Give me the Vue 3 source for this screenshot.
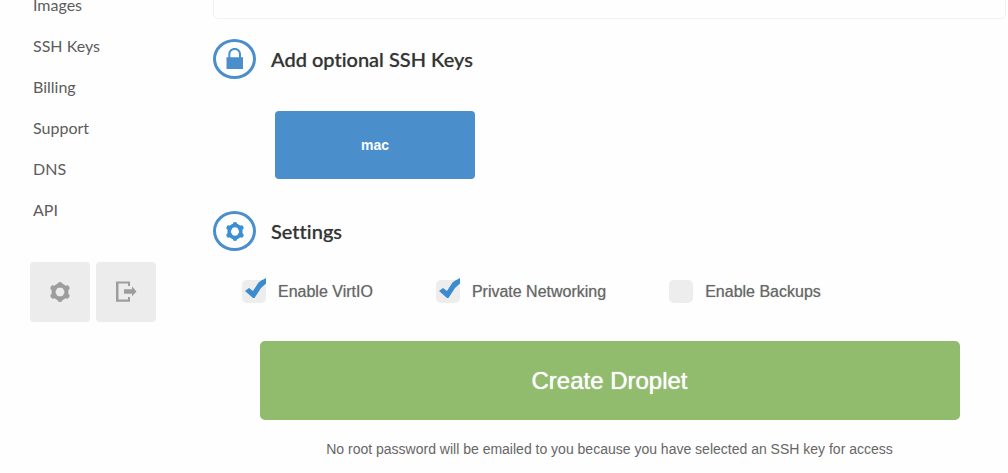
<script setup>
import { ref } from 'vue'

const links = ['Images', 'SSH Keys', 'Billing', 'Support', 'DNS', 'API']
const options = ref([
  { id: 'virtio', label: 'Enable VirtIO', on: true },
  { id: 'network', label: 'Private Networking', on: true },
  { id: 'backups', label: 'Enable Backups', on: false }
])
// Six short rounded teeth around the gear's ring
const teeth = 'M10 3 V2.500 M10 17 V17.500 M4 6.600 L3 6 M16 6.600 L17 6 M4 13.400 L3 14 M16 13.400 L17 14'
</script>

<template>
  <div class="page">
    <aside class="side">
      <nav>
        <a v-for="l in links" :key="l" href="#">{{ l }}</a>
      </nav>
      <div class="tools">
        <button type="button" aria-label="Account settings">
          <svg class="cog" width="20" height="20" viewBox="0 0 20 20">
            <circle cx="10" cy="10" r="6.500" />
            <path :d="teeth" />
          </svg>
        </button>
        <button type="button" aria-label="Log out">
          <svg width="22" height="22" viewBox="0 0 22 22">
            <path d="M1 0.500 H15 V5 H13 V2.500 H3.500 V18.500 H13 V16 H15 V20.800 H1 Z M9 8.300 H17 V5.500 L21.500 10.500 L17 15.200 V12.700 H9 Z" />
          </svg>
        </button>
      </div>
    </aside>

    <main class="main">
      <div class="panel"></div>

      <section>
        <h2>
          <span class="ring">
            <svg width="18" height="22" viewBox="0 0 18 22">
              <path d="M0.500 9.300 H2.300 V6.500 C2.300 2.500 5 0 8.700 0 C12.400 0 15 2.500 15 6.500 V9.300 H17 V21 H0.500 Z M4.300 9.300 H13 V6.500 C13 3.700 11.400 2 8.700 2 C6 2 4.300 3.700 4.300 6.500 Z" fill-rule="evenodd" />
            </svg>
          </span>
          Add optional SSH Keys
        </h2>
        <button type="button" class="key">mac</button>
      </section>

      <section>
        <h2>
          <span class="ring gear">
            <svg class="cog" width="18" height="19" viewBox="0 0 20 20" preserveAspectRatio="none">
              <circle cx="10" cy="10" r="6.500" />
              <path :d="teeth" />
            </svg>
          </span>
          Settings
        </h2>
        <div class="options">
          <label v-for="o in options" :key="o.id" :for="o.id">
            <span class="box">
              <input :id="o.id" v-model="o.on" type="checkbox" />
              <svg v-if="o.on" class="tick" width="24" height="24" viewBox="0 0 24 24">
                <path d="M3 13 L7 10 L11 13 L16.500 4.500 C18 3 21 1.500 24 0 V5.500 L19 10 L12.500 20 H11 Z" />
              </svg>
            </span>
            {{ o.label }}
          </label>
        </div>
      </section>

      <button type="button" class="create">Create Droplet</button>
      <p class="note">No root password will be emailed to you because you have selected an SSH key for access</p>
    </main>
  </div>
</template>

<style>
body {
  margin: 0;
  background: #fefefe;
}
</style>

<style scoped>
.page {
  display: grid;
  grid-template-columns: 213px 1fr;
  overflow: hidden;
  font-family: "Liberation Sans", Arial, sans-serif;
  color: #666;
}
button {
  border: 0;
  padding: 0;
  font-family: inherit;
  cursor: pointer;
}
.side {
  margin-top: -16px;
  padding-left: 30px;
}
nav {
  display: flex;
  flex-direction: column;
  padding-left: 3px;
}
nav a {
  font: 16px/41px Lato, sans-serif;
  color: #5c5c5c;
  text-decoration: none;
}
.tools {
  display: flex;
  gap: 6px;
  margin-top: 32px;
}
.tools button {
  display: grid;
  place-items: center;
  width: 60px;
  height: 60px;
  border-radius: 4px;
  background: #ececec;
  color: #9d9d9d;
}
.tools svg {
  fill: currentColor;
}
.main {
  padding-right: 2px;
}
.panel {
  height: 18px;
  border: 1px solid #f2f2f2;
  border-top: 0;
  border-radius: 0 0 5px 5px;
}
h2 {
  display: flex;
  align-items: center;
  gap: 15px;
  margin: 0;
  padding-top: 20px;
  font: 500 20px/40px Lato, sans-serif;
  font-variant-ligatures: none;
  color: #333;
  text-shadow: 0 0 1px #999;
}
.ring {
  display: grid;
  place-items: center;
  box-sizing: border-box;
  width: 43px;
  height: 40px;
  border: 3px solid #4a8fcc;
  border-radius: 50%;
}
.ring svg {
  fill: #4a8fcc;
}
.ring.gear {
  color: #3a90d0;
}
.page .cog {
  fill: none;
  stroke: currentColor;
  stroke-width: 4px;
}
.cog path {
  stroke-width: 5px;
  stroke-linecap: round;
}
.key {
  display: block;
  width: 200px;
  height: 68px;
  margin: 32px 0 12px 62px;
  border-radius: 4px;
  background: #4a8fcc;
  color: #fff;
  font-size: 14px;
  font-weight: 700;
}
.options {
  display: flex;
  gap: 63px;
  margin: 29px 0 38px 29px;
}
label {
  display: flex;
  align-items: center;
  gap: 12px;
  height: 23px;
  font-size: 16px;
  white-space: nowrap;
  text-shadow: 0 0 1px #aaa;
}
.box {
  position: relative;
  display: flex;
}
input {
  appearance: none;
  width: 24px;
  height: 23px;
  margin: 0;
  border-radius: 5px;
  background: #ededed;
}
.tick {
  position: absolute;
  left: 0;
  top: -2px;
  fill: #3a8bd0;
  pointer-events: none;
}
.create {
  display: block;
  width: calc(100% - 93px);
  height: 79px;
  margin: 0 auto;
  border-radius: 5px;
  background: #91bc6e;
  color: #fff;
  font-size: 24px;
  text-shadow: 0 0 1px #fff;
}
.note {
  margin: 20px 0 0;
  font-size: 14px;
  line-height: 18px;
  text-align: center;
}
</style>
